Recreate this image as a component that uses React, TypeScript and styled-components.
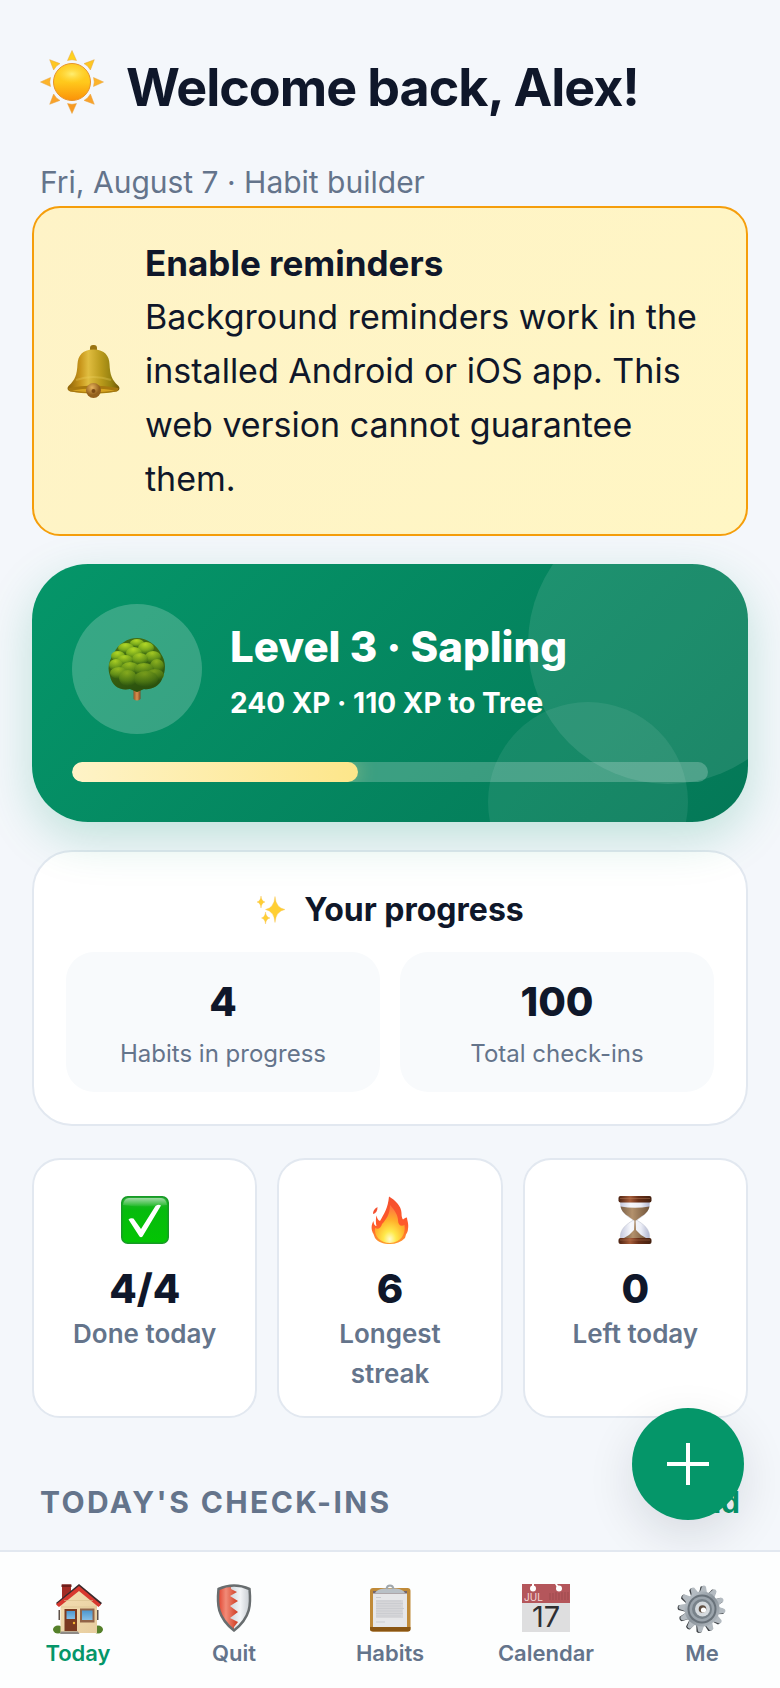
import React from "react"
import styled, { createGlobalStyle } from "styled-components"

const colors = {
  page: "#f4f7fb",
  ink: "#0f172a",
  muted: "#64748b",
  line: "#e2e8f0",
  green: "#059669",
  greenDark: "#047857",
}

const GlobalStyle = createGlobalStyle`
  * {
    box-sizing: border-box;
  }

  body {
    margin: 0;
    background: ${colors.page};
    color: ${colors.ink};
    font-family: Inter, "Liberation Sans", sans-serif;
  }

  h1, h2, p {
    margin: 0;
  }

  svg {
    display: block;
    flex: none;
  }
`

const Page = styled.main`
  padding: 50px 32px 160px;
`

const Header = styled.header`
  padding: 0 8px;
`

const Greeting = styled.div`
  display: flex;
  align-items: flex-start;
  gap: 22px;
  margin-bottom: 32px;
`

const Title = styled.h1`
  font-size: 52px;
  font-weight: 700;
  line-height: 76px;
  letter-spacing: -0.02em;
`

const DateLine = styled.p`
  color: ${colors.muted};
  font-size: 30px;
  line-height: 48px;
`

const Reminder = styled.section`
  display: flex;
  align-items: center;
  gap: 24px;
  padding: 28px 32px;
  border: 2px solid #f59e0b;
  border-radius: 28px;
  background: linear-gradient(135deg, #fef3c7, #fff6c4);
  font-size: 34px;
  line-height: 54px;
`

const ReminderTitle = styled.h2`
  font-size: 35px;
  font-weight: 700;
`

const LevelCard = styled.section`
  position: relative;
  overflow: hidden;
  margin-top: 28px;
  padding: 40px;
  border-radius: 56px;
  background: linear-gradient(135deg, ${colors.green}, ${colors.greenDark});
  box-shadow: 0 16px 48px rgba(5, 150, 105, 0.22);
  color: #fff;
`

const Bubble = styled.span<{ $size: number; $alpha: number }>`
  position: absolute;
  width: ${(props) => props.$size}px;
  height: ${(props) => props.$size}px;
  border-radius: 50%;
  background: rgba(255, 255, 255, ${(props) => props.$alpha});
`

const TopBubble = styled(Bubble)`
  top: -60px;
  right: -60px;
`

const BottomBubble = styled(Bubble)`
  right: 60px;
  bottom: -80px;
`

const LevelRow = styled.div`
  display: flex;
  align-items: center;
  gap: 28px;
  margin-bottom: 28px;
`

const Avatar = styled.div`
  display: grid;
  place-items: center;
  flex: none;
  width: 130px;
  height: 130px;
  border-radius: 50%;
  background: rgba(255, 255, 255, 0.2);
`

const LevelText = styled.div`
  position: relative;
  display: flex;
  flex-direction: column;
  gap: 4px;
`

const LevelTitle = styled.h2`
  font-size: 42px;
  font-weight: 800;
  line-height: 64px;
`

const LevelSub = styled.p`
  font-size: 28px;
  font-weight: 700;
  line-height: 40px;
`

const Track = styled.div`
  position: relative;
  overflow: hidden;
  height: 20px;
  border-radius: 10px;
  background: rgba(255, 255, 255, 0.22);
`

const Fill = styled.div`
  height: 100%;
  border-radius: 10px;
  background: linear-gradient(90deg, #fef3c7, #fde68a);
  box-shadow: 0 0 20px rgba(253, 230, 138, 0.4);
`

const Card = styled.section`
  border: 2px solid ${colors.line};
  background: #fff;
`

const ProgressCard = styled(Card)`
  margin-top: 28px;
  padding: 32px;
  border-radius: 40px;
`

const CardTitle = styled.h2`
  display: flex;
  align-items: center;
  justify-content: center;
  gap: 18px;
  margin-bottom: 16px;
  font-size: 32px;
  font-weight: 700;
  line-height: 52px;
`

const Tiles = styled.div`
  display: grid;
  grid-template-columns: 1fr 1fr;
  gap: 20px;
`

const Tile = styled.div`
  display: flex;
  flex-direction: column;
  gap: 4px;
  padding: 20px;
  border-radius: 28px;
  background: #f8fafc;
  text-align: center;
`

const TileValue = styled.strong`
  font-size: 40px;
  font-weight: 800;
  line-height: 60px;
`

const TileLabel = styled.span`
  color: ${colors.muted};
  font-size: 24px;
  line-height: 36px;
`

const Stats = styled.div`
  display: grid;
  grid-template-columns: repeat(3, 1fr);
  gap: 20px;
  margin-top: 32px;
`

const StatCard = styled(Card)`
  display: flex;
  flex-direction: column;
  align-items: center;
  padding: 24px 24px 22px;
  border-radius: 28px;
  text-align: center;
`

const StatIcon = styled.div`
  display: grid;
  place-items: center;
  height: 72px;
  margin-bottom: 8px;
`

const StatValue = styled.strong`
  font-size: 40px;
  font-weight: 800;
  line-height: 50px;
`

const StatLabel = styled.span`
  color: ${colors.muted};
  font-size: 26px;
  font-weight: 600;
  line-height: 40px;
`

const SectionHead = styled.div`
  display: flex;
  align-items: center;
  justify-content: space-between;
  margin-top: 60px;
  padding: 0 8px;
  line-height: 48px;
`

const SectionTitle = styled.h2`
  color: ${colors.muted};
  font-size: 30px;
  font-weight: 700;
  letter-spacing: 0.08em;
`

const AddLink = styled.a`
  color: ${colors.green};
  font-size: 30px;
  font-weight: 700;
  text-decoration: none;
`

const Fab = styled.button`
  position: fixed;
  right: 36px;
  bottom: 168px;
  display: grid;
  place-items: center;
  width: 112px;
  height: 112px;
  padding: 0;
  border: 0;
  border-radius: 50%;
  background: ${colors.green};
  box-shadow: 0 16px 48px rgba(15, 23, 42, 0.12);
  color: #fff;
`

const Nav = styled.nav`
  position: fixed;
  right: 0;
  bottom: 0;
  left: 0;
  display: grid;
  grid-template-columns: repeat(5, 1fr);
  padding: 32px 0 18px;
  border-top: 2px solid ${colors.line};
  background: #fdfefe;
`

const NavLink = styled.a<{ $active?: boolean }>`
  display: flex;
  flex-direction: column;
  align-items: center;
  gap: 2px;
  color: ${(props) => (props.$active ? colors.green : colors.muted)};
  font-size: 22px;
  font-weight: 600;
  line-height: 34px;
  text-decoration: none;
`

const spin = (count: number) =>
  Array.from({ length: count }, (_, i) => (i * 360) / count)

// rays get warmer towards the bottom of the sun
const rayColors = [
  "#ffd21e",
  "#fdc722",
  "#fcb42a",
  "#f9a22a",
  "#f79a22",
  "#f9a22a",
  "#fcb42a",
  "#fdc722",
]

const SunIcon = () => (
  <svg width="64" height="64" viewBox="0 0 64 64" aria-hidden="true">
    <defs>
      <linearGradient id="sunFill" x1="0" y1="0" x2="0" y2="1">
        <stop offset="0" stopColor="#ffcf2a" />
        <stop offset="0.500" stopColor="#ffc91c" />
        <stop offset="1" stopColor="#fb9208" />
      </linearGradient>
      <radialGradient id="sunShine">
        <stop offset="0" stopColor="#fff27a" stopOpacity="0.900" />
        <stop offset="1" stopColor="#ffe04a" stopOpacity="0" />
      </radialGradient>
    </defs>
    {spin(8).map((angle, i) => (
      <path
        key={angle}
        d="M32 0.500 36.500 10.500Q32 9 27.500 10.500Z"
        fill={rayColors[i]}
        stroke="#e9a540"
        strokeWidth="0.500"
        transform={`rotate(${angle} 32 32)`}
      />
    ))}
    <circle cx="32" cy="32" r="18.500" fill="url(#sunFill)" stroke="#e8932a" />
    <ellipse cx="32" cy="24" rx="15" ry="9" fill="url(#sunShine)" />
  </svg>
)

const BellIcon = () => (
  <svg width="55" height="54" viewBox="0 0 55 54" aria-hidden="true">
    <defs>
      <linearGradient id="bellBody">
        <stop offset="0" stopColor="#8d6208" />
        <stop offset="0.250" stopColor="#c9971c" />
        <stop offset="0.400" stopColor="#e0bd40" />
        <stop offset="0.650" stopColor="#b99a1b" />
        <stop offset="0.850" stopColor="#94800f" />
        <stop offset="1" stopColor="#6e5306" />
      </linearGradient>
      <radialGradient id="bellClapper" cx="0.400" cy="0.300">
        <stop offset="0" stopColor="#e8b45c" />
        <stop offset="1" stopColor="#94601c" />
      </radialGradient>
    </defs>
    <rect x="24" y="1" width="7" height="7" rx="3" fill="#9a7412" />
    <path
      d="M27.500 5.500C16 5.500 12 12 11.500 20 11 31 9 36 3 41.500 1 43.500 1 46 3.500 47 18 50.500 38 50.500 51.500 47 54 46 54 43.500 52 41.500 46 36 44 31 43.500 20 43 12 39 5.500 27.500 5.500Z"
      fill="url(#bellBody)"
    />
    <path
      d="M2.500 44Q27 39 52.500 44 52.500 47 51 47.500 28 51 4 47.500 2 46.500 2.500 44Z"
      fill="#a8790f"
    />
    <path d="M6 46.500Q27 42.500 49 46.500 28 50 6 46.500Z" fill="#d8a520" />
    <path
      d="M10 36Q27 30 45 36"
      stroke="#efd363"
      strokeWidth="2"
      strokeOpacity="0.300"
      fill="none"
    />
    <circle cx="27.500" cy="46.500" r="7.500" fill="url(#bellClapper)" />
    <circle cx="27.500" cy="47" r="2" fill="#7c4a14" />
  </svg>
)

const leaves = [
  [29, 6, 7, 4],
  [18, 11, 8, 5],
  [38, 11, 8, 6],
  [10, 19, 7, 5],
  [26, 16, 8, 6],
  [45, 20, 8, 6],
  [17, 23, 8, 5],
  [32, 22, 8, 6],
  [8, 28, 7, 6],
  [49, 29, 7, 7],
  [22, 31, 9, 6],
  [36, 32, 10, 6],
  [11, 36, 9, 6],
  [47, 38, 9, 6],
  [20, 41, 9, 8],
  [38, 42, 12, 8],
]

const TreeIcon = () => (
  <svg width="58" height="64" viewBox="0 0 58 64" aria-hidden="true">
    <defs>
      <radialGradient id="leaf" cx="0.450" cy="0.200" r="0.800">
        <stop offset="0" stopColor="#b2d726" />
        <stop offset="0.600" stopColor="#7bab1c" />
        <stop offset="1" stopColor="#3f6f12" />
      </radialGradient>
      <linearGradient id="treeShade" x1="0" y1="0" x2="0.300" y2="1">
        <stop offset="0.350" stopColor="#1d400b" stopOpacity="0" />
        <stop offset="1" stopColor="#1d400b" stopOpacity="0.600" />
      </linearGradient>
      <linearGradient id="trunk">
        <stop offset="0" stopColor="#8c5527" />
        <stop offset="0.500" stopColor="#dc9150" />
        <stop offset="1" stopColor="#7d4822" />
      </linearGradient>
    </defs>
    <path d="M25.500 48H32.500V62Q29 65 25.500 62Z" fill="url(#trunk)" />
    <path
      d="M29 1C39 1 49 8 53 17 58 24 58 34 54 42 51 50 42 53 36 52L29 55 22 52C12 54 4 49 2 39-1 31 1 23 6 16 10 7 20 1 29 1Z"
      fill="#426d12"
    />
    {leaves.map(([cx, cy, rx, ry]) => (
      <ellipse
        key={`${cx}-${cy}`}
        cx={cx}
        cy={cy}
        rx={rx}
        ry={ry}
        fill="url(#leaf)"
      />
    ))}
    <path
      d="M29 1C39 1 49 8 53 17 58 24 58 34 54 42 51 50 42 53 36 52L29 55 22 52C12 54 4 49 2 39-1 31 1 23 6 16 10 7 20 1 29 1Z"
      fill="url(#treeShade)"
    />
  </svg>
)

const SparklesIcon = () => (
  <svg width="30" height="30" viewBox="0 0 30 30" aria-hidden="true">
    <g fill="#ffcf33" stroke="#f8c65a" strokeWidth="0.400">
      <path d="M19 1.500Q20 13 29 14.500 20 16 19 27.500 18 16 9.500 14.500 18 13 19 1.500Z" />
      <path d="M5 1Q5.500 6.200 9 7 5.500 7.800 5 13 4.500 7.800 1 7 4.500 6.200 5 1Z" />
      <path d="M9.500 17Q10 22.200 14 23 10 23.800 9.500 29 9 23.800 5.500 23 9 22.200 9.500 17Z" />
    </g>
  </svg>
)

const CheckIcon = () => (
  <svg width="48" height="48" viewBox="0 0 48 48" aria-hidden="true">
    <defs>
      <linearGradient id="checkBox" x1="0" y1="0" x2="0" y2="1">
        <stop offset="0" stopColor="#2fae3a" />
        <stop offset="0.300" stopColor="#06bb0d" />
        <stop offset="1" stopColor="#03c503" />
      </linearGradient>
      <linearGradient id="checkGloss" x1="0" y1="0" x2="0" y2="1">
        <stop offset="0" stopColor="#fff" stopOpacity="0.550" />
        <stop offset="1" stopColor="#fff" stopOpacity="0.050" />
      </linearGradient>
    </defs>
    <rect
      x="0.750"
      y="0.750"
      width="46.500"
      height="46.500"
      rx="6"
      fill="url(#checkBox)"
      stroke="#179a26"
      strokeWidth="1.500"
    />
    <path d="M8 2H40Q45 2 46 9 24 12 2 9 3 2 8 2Z" fill="url(#checkGloss)" />
    <path
      d="M7.500 23.500Q9.500 21.500 12.500 22.500L20 33 34.500 10Q37.500 8 40 9.500L21.500 40.500Q20 42 18.500 40.500Z"
      fill="#fff"
    />
  </svg>
)

const FlameIcon = () => (
  <svg width="38" height="48" viewBox="0 0 38 48" aria-hidden="true">
    <defs>
      <linearGradient id="flameOuter" x1="0" y1="0" x2="0" y2="1">
        <stop offset="0" stopColor="#f4502f" />
        <stop offset="0.600" stopColor="#ff5a2a" />
        <stop offset="1" stopColor="#ff9d2e" />
      </linearGradient>
      <radialGradient id="flameInner" cx="0.500" cy="0.900" r="0.850">
        <stop offset="0" stopColor="#fffbd0" />
        <stop offset="0.250" stopColor="#ffe94a" />
        <stop offset="0.600" stopColor="#ffb02a" />
        <stop offset="1" stopColor="#ff7440" />
      </radialGradient>
    </defs>
    <path
      d="M18 0.500C24 4 30.500 10 30.500 17 30.500 20 31 22.500 32 23.500 33.500 22.500 34 21.500 36 21.500 36 24 38 28 37 33 37 35 36 37 35 38.500L34 42C30 46 25 48 19 48 12 48 7 46 4 42L2.500 38C0 34 0 29 2.500 25 2.500 28 4 30 5.500 30 4.500 26 5 21 5.500 19.500 6 22 7 24.500 9 25 13 18 17 12 18 0.500Z"
      fill="url(#flameOuter)"
    />
    <path d="M6.500 11C3 13 2 15 2 18 5 17.500 6.500 15 6.500 11Z" fill="#f4502f" />
    <path
      d="M19 9C24 14 27 20 27 24 27 29 30 31 33.500 29 35 38 30 46.500 19 47 9 47 3 40 4 32 7 34 10 32 11 28 15 24 19 18 19 9Z"
      fill="url(#flameInner)"
    />
  </svg>
)

const HourglassIcon = () => (
  <svg width="34" height="48" viewBox="0 0 34 48" aria-hidden="true">
    <defs>
      <linearGradient id="wood">
        <stop offset="0" stopColor="#4b2110" />
        <stop offset="0.350" stopColor="#a65d3a" />
        <stop offset="0.600" stopColor="#6a3018" />
        <stop offset="1" stopColor="#43200f" />
      </linearGradient>
      <linearGradient id="glass">
        <stop offset="0" stopColor="#c4c8de" />
        <stop offset="0.350" stopColor="#f7f8fc" />
        <stop offset="0.700" stopColor="#eceef6" />
        <stop offset="1" stopColor="#b0b5d0" />
      </linearGradient>
      <linearGradient id="sand">
        <stop offset="0" stopColor="#7a6048" />
        <stop offset="0.400" stopColor="#b3916c" />
        <stop offset="1" stopColor="#71543a" />
      </linearGradient>
    </defs>
    <path
      d="M2.500 6H31.500C32 16 25 20 18.500 24 25 28 33 33 31.500 43H2.500C1 33 9 28 15.500 24 9 20 2 16 2.500 6Z"
      fill="url(#glass)"
      stroke="#b8bccb"
      strokeWidth="0.500"
    />
    <path
      d="M2.500 10.500Q17 13 31.500 10.500C30 18 23 20 18 24.500H16C11 20 4 18 2.500 10.500Z"
      fill="url(#sand)"
    />
    <path
      d="M16.500 23H17.500L18 34Q22 39 28 42H6Q12 39 16 34Z"
      fill="url(#sand)"
    />
    <rect x="0.500" y="0" width="33" height="6.500" rx="2" fill="url(#wood)" />
    <rect x="0.500" y="42" width="33" height="6" rx="2" fill="url(#wood)" />
    <path
      d="M2 2.500H32M2 44H32"
      stroke="#c08462"
      strokeWidth="0.800"
      strokeOpacity="0.500"
    />
  </svg>
)

const HouseIcon = () => (
  <svg width="50" height="50" viewBox="0 0 50 50" aria-hidden="true">
    <defs>
      <linearGradient id="wall" x1="0" y1="0" x2="1" y2="1">
        <stop offset="0" stopColor="#f4dfb2" />
        <stop offset="1" stopColor="#e7cd9f" />
      </linearGradient>
      <linearGradient id="pane" x1="0" y1="0" x2="0" y2="1">
        <stop offset="0" stopColor="#4d97cf" />
        <stop offset="1" stopColor="#86bfe6" />
      </linearGradient>
    </defs>
    <ellipse cx="5" cy="45.500" rx="5" ry="4" fill="#55802a" />
    <ellipse cx="45" cy="45.500" rx="5" ry="4" fill="#55802a" />
    <path d="M7.500 21 26 4 44 21V49H7.500Z" fill="url(#wall)" />
    <path d="M5.500 26H7V36H5.500ZM44 26H45.500V36H44Z" fill="#5e5148" />
    <path d="M9 0.500H18V11L9 18Z" fill="#a32c25" />
    <path d="M8.500 0.500H18.500V3H8.500Z" fill="#6e1f1b" />
    <path d="M26 0 49 19 46.500 22 26 5.500 5.500 22 3 19Z" fill="#3c2a2c" />
    <path d="M26 2 48 20.500 45.500 23 26 7 6 23 3 20.500Z" fill="#d8382f" />
    <path
      d="M11 16.500H40M8 23H44"
      stroke="#d7bf8d"
      strokeWidth="0.600"
      fill="none"
    />
    <rect x="11.500" y="25" width="12.500" height="22" fill="#7b3a20" />
    <rect x="13.500" y="27" width="8.500" height="8" fill="url(#pane)" />
    <circle cx="21" cy="39" r="1.200" fill="#f2b735" />
    <rect x="27" y="24.500" width="14.500" height="14" fill="#916448" />
    <rect x="29" y="26.500" width="10.500" height="9.500" fill="url(#pane)" />
    <path d="M8 47.500H25L26.500 50H7Z" fill="#8e8a86" />
  </svg>
)

const ShieldIcon = () => (
  <svg width="50" height="50" viewBox="0 0 50 50" aria-hidden="true">
    <defs>
      <linearGradient id="shieldRed">
        <stop offset="0" stopColor="#e1402c" />
        <stop offset="0.400" stopColor="#f18b78" />
        <stop offset="1" stopColor="#cf3a20" />
      </linearGradient>
      <linearGradient id="shieldSilver">
        <stop offset="0" stopColor="#a9b2ba" />
        <stop offset="0.700" stopColor="#f2f4f6" />
        <stop offset="1" stopColor="#c6cbd0" />
      </linearGradient>
    </defs>
    <path
      d="M25 1.500Q33 1.500 40.500 5C42 20 42 33 25 46.500 8 33 8 20 9.500 5Q17 1.500 25 1.500Z"
      fill="url(#shieldSilver)"
    />
    <path
      d="M22 2Q15 2.500 9.500 5C8 20 8 33 25 46.500V43L29 38 21 34 29 28 21 22 29 17 21 12 28 8 22 5Z"
      fill="url(#shieldRed)"
    />
    <path
      d="M25 1.500Q33 1.500 40.500 5C42 20 42 33 25 46.500 8 33 8 20 9.500 5Q17 1.500 25 1.500Z"
      fill="none"
      stroke="#686d6f"
      strokeWidth="2.500"
    />
  </svg>
)

const ClipboardIcon = () => (
  <svg width="50" height="50" viewBox="0 0 50 50" aria-hidden="true">
    <rect x="5" y="4" width="40.500" height="43.500" rx="3" fill="#c08a38" />
    <path
      d="M5 43H45.500V45Q45.500 47.500 43 47.500H8Q5 47.500 5 45Z"
      fill="#8a5512"
    />
    <rect x="8" y="7" width="34" height="36" fill="#e6e6e8" />
    <rect x="8" y="7" width="34" height="2.500" fill="#76666a" />
    <path d="M10 9Q12 5 19 4.500H31Q38 5 40 9Z" fill="#b9c0c6" />
    <path
      d="M21.500 5Q22 1.500 25 1.500T28.500 5"
      stroke="#a0a8ae"
      strokeWidth="2"
      fill="none"
    />
    <rect x="11" y="16" width="27" height="18" fill="#d6d6d9" />
    <path
      d="M11 13.500H16M11 17H36M11 19.500H38M11 22H36M11 24.500H39M11 27H37M11 29.500H38M11 32H36M11 38H20"
      stroke="#cbccd0"
      strokeWidth="1"
    />
  </svg>
)

const CalendarIcon = () => (
  <svg width="50" height="50" viewBox="0 0 50 50" aria-hidden="true">
    <rect x="1" y="0" width="48" height="48" fill="#dededf" />
    <rect x="1" y="0" width="48" height="19" fill="#b4565b" />
    <path
      d="M29 9V16M32 9V16M35 8V16M38 9V16M41 8V16M44 8V16M47 8V16"
      stroke="#9d4a4f"
      strokeWidth="1"
    />
    <g fill="#fff">
      <circle cx="12" cy="4.500" r="3" />
      <circle cx="38" cy="4.500" r="3" />
      <path d="M11 0H13V4H11ZM34 0H36L39 4 37 5Z" />
    </g>
    <text x="3" y="16.500" fontSize="10" fontWeight="400" fill="#f4dada">
      JUL
    </text>
    <text
      x="25"
      y="43"
      fontSize="29"
      fontWeight="400"
      textAnchor="middle"
      fill="#2f2f31"
    >
      17
    </text>
  </svg>
)

const GearIcon = () => (
  <svg width="50" height="50" viewBox="0 0 50 50" aria-hidden="true">
    <defs>
      <linearGradient id="steel" x1="0" y1="0" x2="1" y2="1">
        <stop offset="0" stopColor="#c9d0d6" />
        <stop offset="0.500" stopColor="#8b949c" />
        <stop offset="1" stopColor="#b8bfc5" />
      </linearGradient>
    </defs>
    {spin(12).map((angle) => (
      <path
        key={angle}
        d="M21.500 10 22.500 2.500Q25 0.500 27.500 2.500L28.500 10Z"
        fill="#3e4246"
        transform={`translate(-1 0.500) rotate(${angle + 5} 25 25)`}
      />
    ))}
    {spin(12).map((angle) => (
      <path
        key={angle}
        d="M21 10 23 2.500Q25 0.500 27 2.500L29 10Z"
        fill="#b4bbc1"
        transform={`rotate(${angle + 5} 25 25)`}
      />
    ))}
    <circle cx="25" cy="25" r="17.500" fill="url(#steel)" />
    <circle cx="25" cy="25" r="14.500" fill="#69727a" />
    <circle cx="25" cy="25" r="12.500" fill="#9ba4ac" />
    <circle cx="25" cy="25" r="10" fill="#78828a" />
    <circle cx="25.500" cy="25" r="7.500" fill="#d5dade" />
    <circle cx="25.500" cy="25" r="3.800" fill="#5f4f42" />
    <circle cx="26.500" cy="26" r="2.600" fill="#fff" />
  </svg>
)

const PlusIcon = () => (
  <svg width="42" height="42" viewBox="0 0 42 42" aria-hidden="true">
    <path d="M21 0V42M0 21H42" stroke="currentColor" strokeWidth="4" />
  </svg>
)

const stats = [
  { icon: <CheckIcon />, value: "4/4", label: "Done today" },
  { icon: <FlameIcon />, value: "6", label: "Longest streak" },
  { icon: <HourglassIcon />, value: "0", label: "Left today" },
]

const tabs = [
  { icon: <HouseIcon />, label: "Today" },
  { icon: <ShieldIcon />, label: "Quit" },
  { icon: <ClipboardIcon />, label: "Habits" },
  { icon: <CalendarIcon />, label: "Calendar" },
  { icon: <GearIcon />, label: "Me" },
]

const App = () => {
  const progress = 45

  return (
    <>
      <GlobalStyle />
      <Page>
        <Header>
          <Greeting>
            <SunIcon />
            <Title>Welcome back, Alex!</Title>
          </Greeting>
          <DateLine>Fri, August 7 · Habit builder</DateLine>
        </Header>

        <Reminder>
          <BellIcon />
          <div>
            <ReminderTitle>Enable reminders</ReminderTitle>
            <p>
              Background reminders work in the installed Android or iOS app.
              This web version cannot guarantee them.
            </p>
          </div>
        </Reminder>

        <LevelCard>
          <TopBubble $size={280} $alpha={0.1} />
          <BottomBubble $size={200} $alpha={0.08} />
          <LevelRow>
            <Avatar>
              <TreeIcon />
            </Avatar>
            <LevelText>
              <LevelTitle>Level 3 · Sapling</LevelTitle>
              <LevelSub>240 XP · 110 XP to Tree</LevelSub>
            </LevelText>
          </LevelRow>
          <Track>
            <Fill style={{ width: `${progress}%` }} />
          </Track>
        </LevelCard>

        <ProgressCard>
          <CardTitle>
            <SparklesIcon />
            Your progress
          </CardTitle>
          <Tiles>
            <Tile>
              <TileValue>4</TileValue>
              <TileLabel>Habits in progress</TileLabel>
            </Tile>
            <Tile>
              <TileValue>100</TileValue>
              <TileLabel>Total check-ins</TileLabel>
            </Tile>
          </Tiles>
        </ProgressCard>

        <Stats>
          {stats.map(({ icon, value, label }) => (
            <StatCard key={label}>
              <StatIcon>{icon}</StatIcon>
              <StatValue>{value}</StatValue>
              <StatLabel>{label}</StatLabel>
            </StatCard>
          ))}
        </Stats>

        <SectionHead>
          <SectionTitle>TODAY'S CHECK-INS</SectionTitle>
          <AddLink href="#add">Add</AddLink>
        </SectionHead>
      </Page>

      <Fab type="button" aria-label="Add habit">
        <PlusIcon />
      </Fab>

      <Nav>
        {tabs.map(({ icon, label }, index) => (
          <NavLink key={label} href="#" $active={index === 0}>
            {icon}
            {label}
          </NavLink>
        ))}
      </Nav>
    </>
  )
}

export default App
